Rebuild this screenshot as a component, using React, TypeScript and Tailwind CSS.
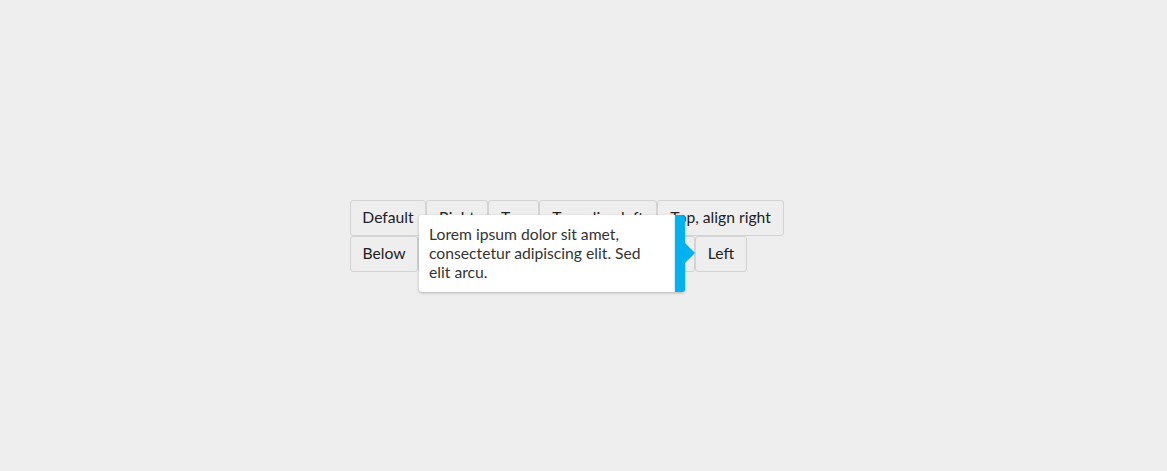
import React from "react";

const btn =
  "h-[36px] border border-[#d3d3d3] rounded-[3px] bg-[#eeeeee] text-[15.7px] text-[#222222] flex items-center justify-center shrink-0 whitespace-nowrap overflow-hidden";

export default function App() {
  return (
    <div
      className="w-[1167px] h-[471px] bg-[#eeeeee] pt-[200px]"
      style={{ fontFamily: "Lato, 'Open Sans', sans-serif" }}
    >
      <div className="relative w-[467px] mx-auto flex flex-col gap-0">
        <div className="flex">
          <button className={`${btn} w-[76px]`}>Default</button>
          <button className={`${btn} w-[62px]`}>Right</button>
          <button className={`${btn} w-[51px]`}>Top</button>
          <button className={`${btn} w-[118px]`}>Top, align left</button>
          <button className={`${btn} w-[127px]`}>Top, align right</button>
        </div>
        <div className="flex">
          <button className={`${btn} h-[35px] w-[68px]`}>Below</button>
          <button className={`${btn} h-[35px] w-[134px]`}>Below, align left</button>
          <button className={`${btn} h-[35px] w-[143px]`}>Below, align right</button>
          <button className={`${btn} h-[35px] w-[52px]`}>Left</button>
        </div>
        <div className="absolute left-[69px] top-[15px] flex">
          <div className="w-[256px] bg-white rounded-l-[3px] shadow-[0_1px_3px_rgba(0,0,0,0.25)] pl-[10px] pr-[4px] py-[10px] text-[15.7px] leading-[19px] text-[#333333] whitespace-nowrap">
            Lorem ipsum dolor sit amet,
            <br />
            consectetur adipiscing elit. Sed
            <br />
            elit arcu.
          </div>
          <div className="relative w-[10px] bg-[#00b3f0] rounded-r-[3px] shadow-[0_1px_3px_rgba(0,0,0,0.25)]">
            <div className="absolute left-[10px] top-[28px] w-0 h-0 border-y-[10px] border-y-transparent border-l-[10px] border-l-[#00b3f0]" />
          </div>
        </div>
      </div>
    </div>
  );
}
